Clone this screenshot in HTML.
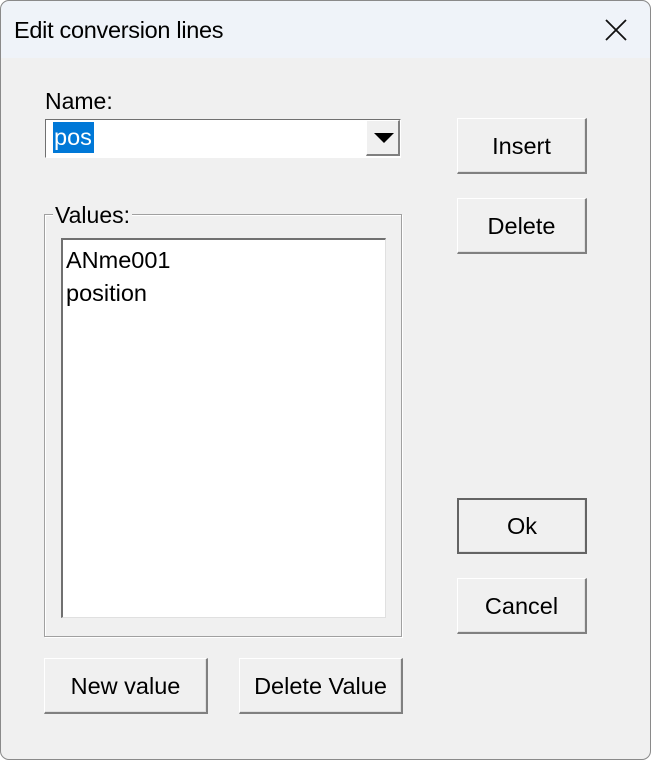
<!DOCTYPE html>
<html><head><style>
*{margin:0;padding:0;box-sizing:border-box}
body{width:651px;height:760px;background:#fff;position:relative;overflow:hidden;font-family:"Liberation Sans",sans-serif;color:#000}
.win{position:absolute;left:0;top:0;width:651px;height:760px;border-radius:9px;background:#f0f0f0;overflow:hidden}
.frame{position:absolute;left:0;top:0;width:651px;height:760px;border:1px solid #8a8a8a;border-radius:9px;z-index:5;pointer-events:none}
.title{position:absolute;left:0;top:0;width:651px;height:58px;background:#eff3f9}
.title span{position:absolute;left:14px;top:17px;font-size:23.5px;letter-spacing:-0.3px}
.abs{position:absolute}
.lbl{font-size:23px;position:absolute}
.btn{position:absolute;background:#f0f0f0;border-top:1px solid #fff;border-left:1px solid #fff;border-right:2px solid #808080;border-bottom:2px solid #808080;box-shadow:inset -1px -1px 0 #e0e0e0;font-size:23.5px;text-align:center}
.btn.def{border:2px solid #646464}
</style></head><body>
<div class="win">
<div class="title"><span>Edit conversion lines</span>
<svg class="abs" style="left:605px;top:19px" width="22" height="22" viewBox="0 0 22 22"><path d="M1 1L21 21M21 1L1 21" stroke="#111" stroke-width="1.8"/></svg></div>

<div class="lbl" style="left:45px;top:88px">Name:</div>
<div class="abs" style="left:45px;top:119px;width:356px;height:39px;background:#fff;border-top:1px solid #707070;border-left:1px solid #707070;border-right:1px solid #fff;border-bottom:1px solid #fff"></div>
<div class="abs" style="left:53px;top:122px;height:31px;width:41px;background:#0078d7;color:#fff;font-size:23.5px;line-height:31px;padding-left:1px">pos</div>
<div class="abs" style="left:366px;top:120px;width:34px;height:36px;background:#f0f0f0;border-top:1px solid #fff;border-left:1px solid #fff;border-right:2px solid #808080;border-bottom:2px solid #808080"></div>
<svg class="abs" style="left:374px;top:133px" width="20" height="11"><path d="M0 0H20L10 10Z" fill="#000"/></svg>

<div class="abs" style="left:44px;top:214px;width:358px;height:423px;border:1px solid #a0a0a0;box-shadow:inset 1px 1px 0 #fff,1px 1px 0 #fff"></div>
<div class="lbl" style="left:53px;top:202px;background:#f0f0f0;padding:0 2px">Values:</div>
<div class="abs" style="left:61px;top:238px;width:325px;height:380px;background:#fff;border-top:2px solid #707070;border-left:2px solid #707070;border-right:1px solid #e0e0e0;border-bottom:1px solid #e0e0e0;font-size:23.5px;line-height:33px;padding:4px 0 0 3px">ANme001<br>position</div>

<div class="btn" style="left:457px;top:118px;width:130px;height:56px;line-height:54px">Insert</div>
<div class="btn" style="left:457px;top:198px;width:130px;height:56px;line-height:54px">Delete</div>
<div class="btn def" style="left:457px;top:498px;width:130px;height:56px;line-height:52px">Ok</div>
<div class="btn" style="left:457px;top:578px;width:130px;height:56px;line-height:54px">Cancel</div>
<div class="btn" style="left:44px;top:658px;width:164px;height:56px;line-height:54px">New value</div>
<div class="btn" style="left:239px;top:658px;width:164px;height:56px;line-height:54px">Delete Value</div>
</div>
<div class="frame"></div>
</body></html>
